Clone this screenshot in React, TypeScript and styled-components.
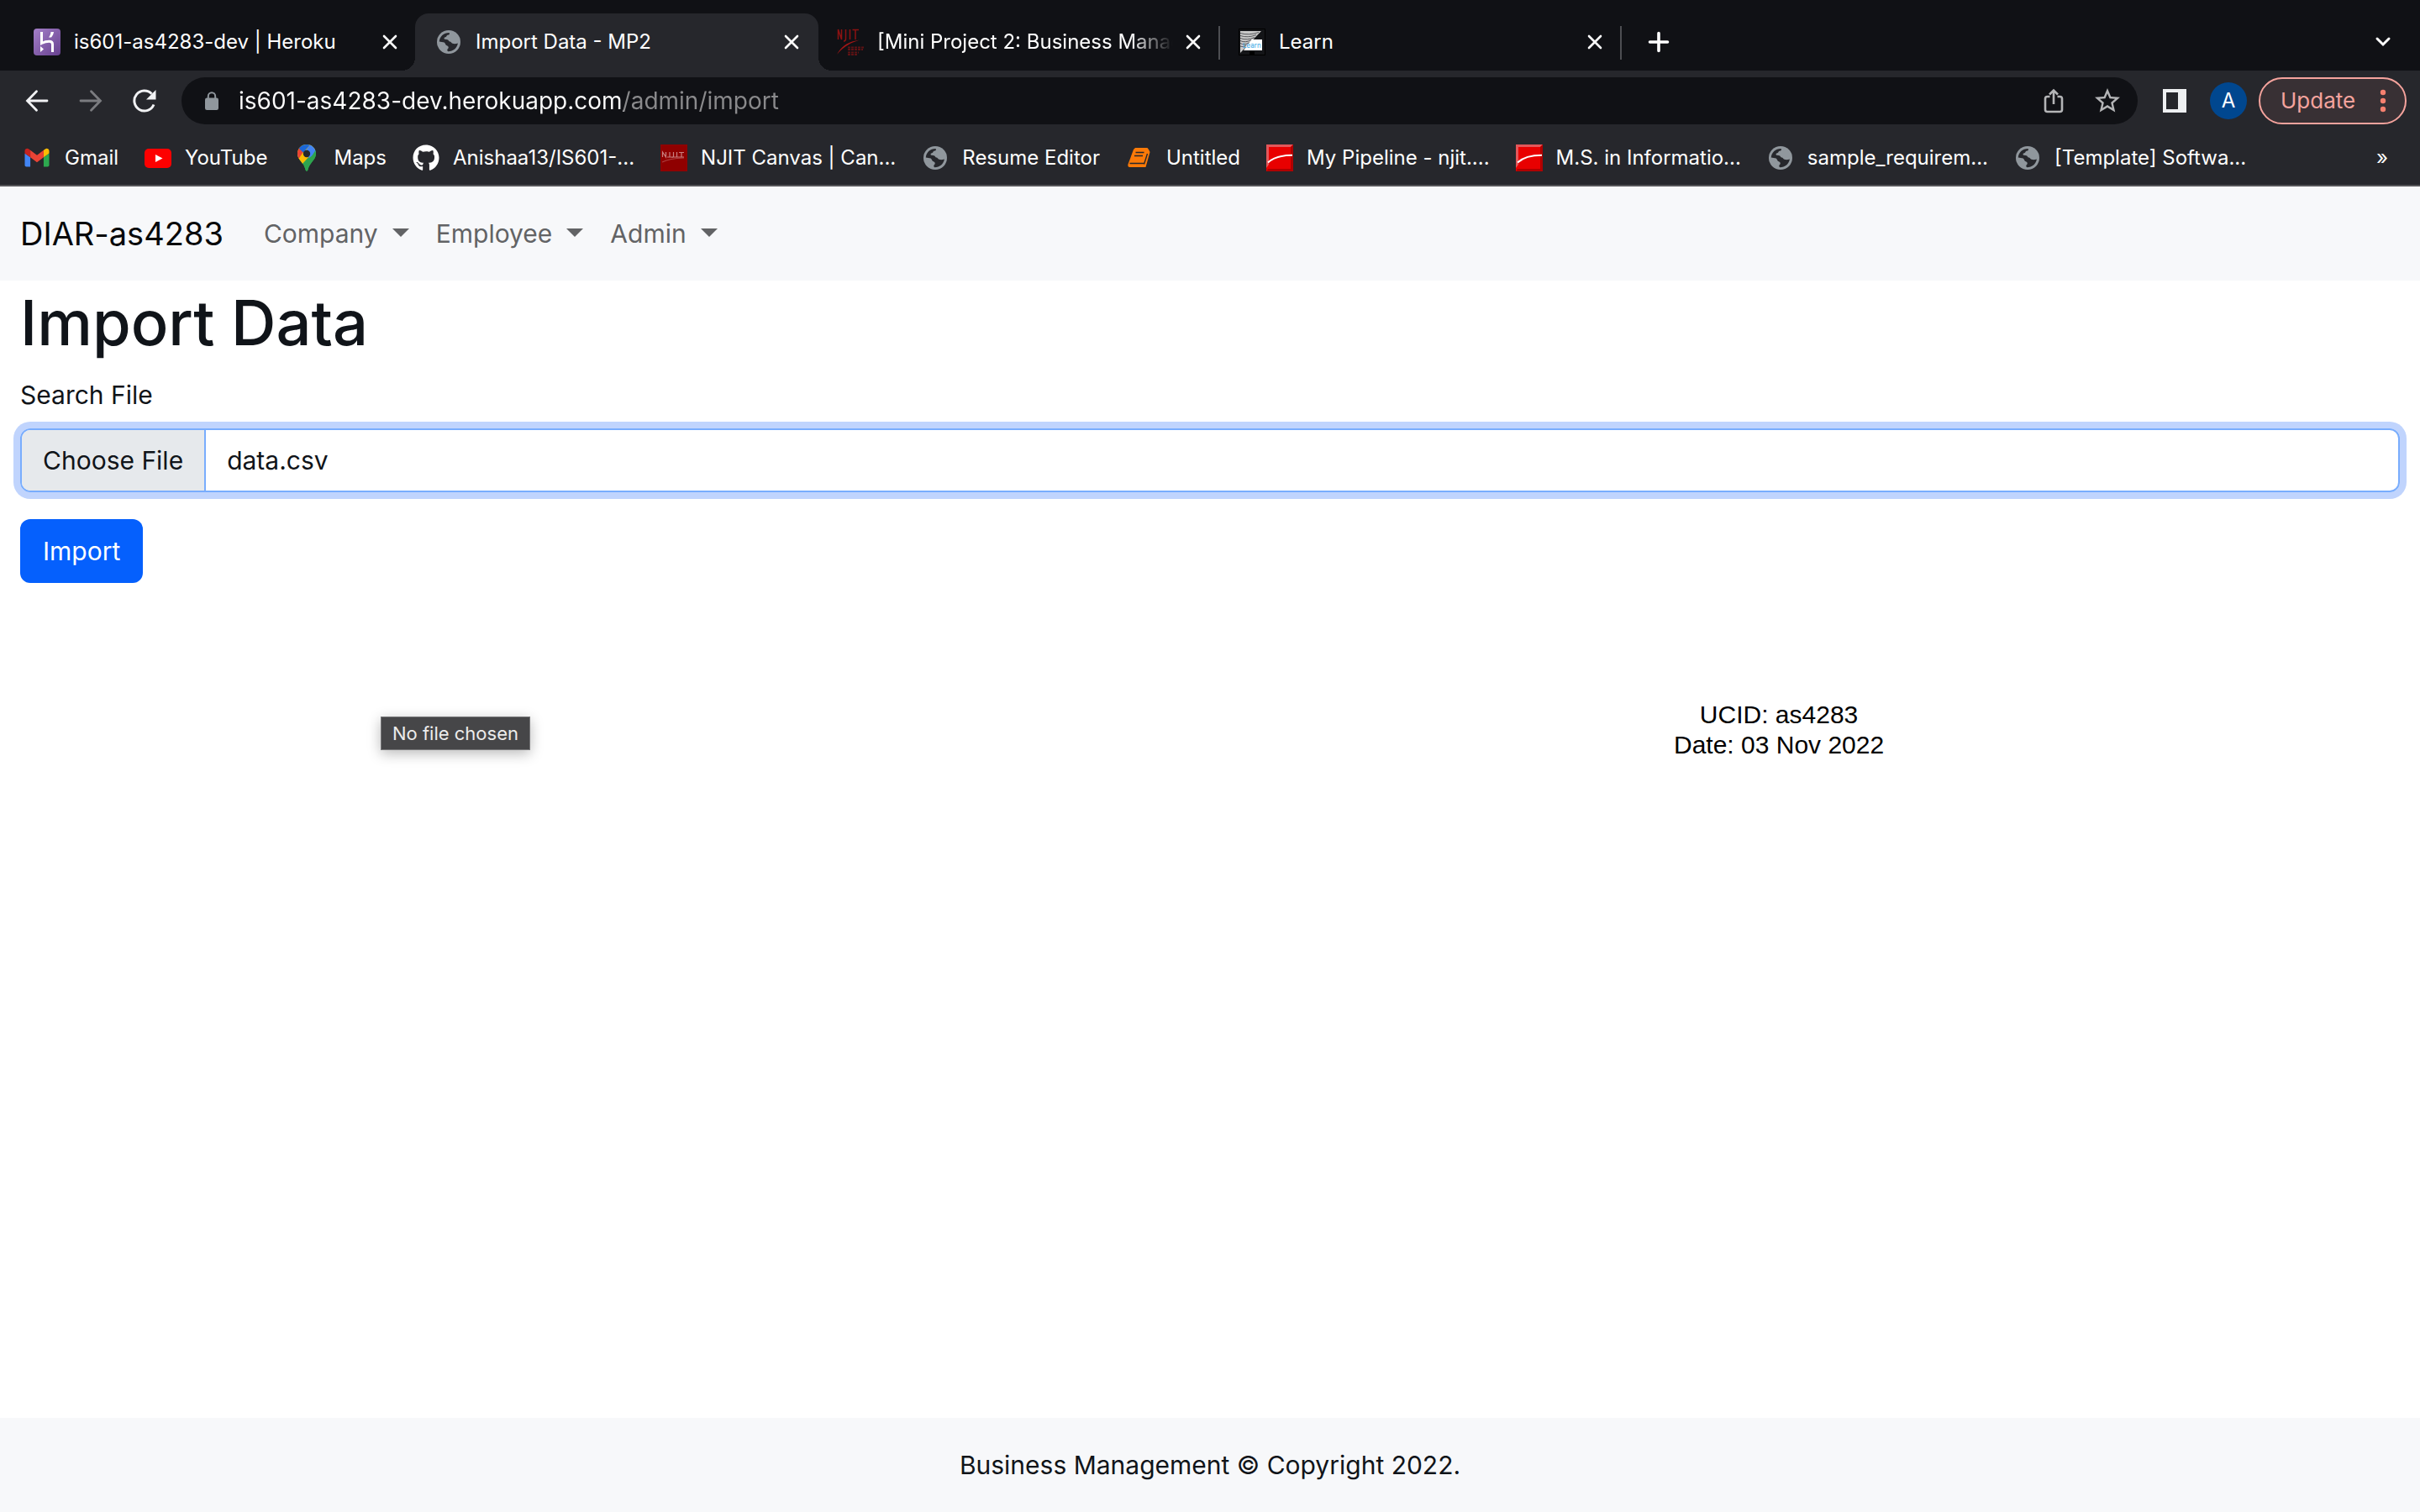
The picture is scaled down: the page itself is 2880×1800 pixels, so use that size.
import React, { useState } from "react";
import styled, { createGlobalStyle, css } from "styled-components";
import { FaGithub } from "react-icons/fa";
import { MdStarOutline } from "react-icons/md";

const color = {
  strip: "#101115",
  toolbar: "#26272c",
  chromeText: "#ffffff",
  chromeMuted: "#8a8a8c",
  iconGray: "#90979d",
  panel: "#f7f8fa",
  ink: "#101419",
  navLink: "#626365",
  focusBorder: "#79adfd",
  focusRing: "#c0d4fd",
  primary: "#0560fd",
};

const GlobalStyle = createGlobalStyle`
  *, *::before, *::after { box-sizing: border-box; }
  body {
    margin: 0;
    background: #ffffff;
    color: ${color.ink};
    font-family: Inter, "Liberation Sans", sans-serif;
    font-size: 30px;
    line-height: 48px;
  }
  button, input { font: inherit; color: inherit; }
  button { border: 0; padding: 0; background: none; cursor: pointer; }
  svg { display: block; flex: none; }
`;

const Page = styled.div`
  min-height: 100vh;
  display: flex;
  flex-direction: column;
`;

/* ---------- browser window ---------- */

const Browser = styled.header`
  background: ${color.toolbar};
  color: ${color.chromeText};
  border-bottom: 2px solid #555558;
  font-size: 24px;
  line-height: 32px;
`;

const TabStrip = styled.div`
  display: flex;
  align-items: flex-end;
  height: 84px;
  padding: 0 16px;
  background: ${color.strip};
`;

const flare = css`
  content: "";
  position: absolute;
  bottom: 0;
  width: 16px;
  height: 16px;
`;

const Tab = styled.div<{ $active?: boolean; $divided?: boolean }>`
  position: relative;
  display: flex;
  align-items: center;
  width: 478px;
  height: 68px;
  padding: 0 14px 0 24px;
  border-radius: 16px 16px 0 0;
  ${(p) =>
    p.$active &&
    css`
      width: 480px;
      margin-right: -2px;
      padding-right: 16px;
      background: ${color.toolbar};
      &::before {
        ${flare}
        left: -16px;
        background: radial-gradient(circle at 0 0, transparent 16px, ${color.toolbar} 16px);
      }
      &::after {
        ${flare}
        right: -16px;
        background: radial-gradient(circle at 100% 0, transparent 16px, ${color.toolbar} 16px);
      }
    `}
  ${(p) =>
    p.$divided &&
    css`
      &::after {
        content: "";
        position: absolute;
        right: -2px;
        top: 15px;
        width: 2px;
        height: 40px;
        background: #4d4e52;
      }
    `}
`;

const TabTitle = styled.button<{ $fade?: boolean }>`
  flex: 1;
  min-width: 0;
  display: flex;
  align-items: center;
  gap: 16px;
  white-space: nowrap;
  text-align: left;
  ${(p) => p.$fade && "mask-image: linear-gradient(to right, #000 calc(100% - 60px), transparent calc(100% - 8px));"}
`;

const IconButton = styled.button<{ $size: number }>`
  flex: none;
  display: flex;
  align-items: center;
  justify-content: center;
  width: ${(p) => p.$size}px;
  height: ${(p) => p.$size}px;
`;

const NewTab = styled(IconButton)`
  margin: 0 auto 2px 14px;
`;

const TabSearch = styled(IconButton)`
  margin-bottom: 2px;
  margin-right: -4px;
`;

const Toolbar = styled.div`
  display: flex;
  align-items: center;
  height: 72px;
  padding: 0 16px 0 12px;
`;

const Omnibox = styled.div`
  flex: 1;
  display: flex;
  align-items: center;
  height: 56px;
  margin: 0 12px;
  padding: 0 4px 0 28px;
  border-radius: 28px;
  background: ${color.strip};
`;

const UrlInput = styled.input`
  flex: 1;
  min-width: 0;
  margin-left: 24px;
  padding: 0;
  border: 0;
  outline: 0;
  font-size: 28px;
  line-height: 36px;
  background: linear-gradient(to right, ${color.chromeText} 458px, ${color.chromeMuted} 458px);
  background-clip: text;
  -webkit-text-fill-color: transparent;
`;

const Avatar = styled.button`
  width: 44px;
  height: 44px;
  margin: 0 14px 0 10px;
  border-radius: 50%;
  background: #00478f;
  font-size: 24px;
  line-height: 44px;
`;

const Update = styled.button`
  display: flex;
  align-items: center;
  justify-content: space-between;
  width: 176px;
  height: 56px;
  padding: 0 22px 0 24px;
  border: 2px solid #f5a39d;
  border-radius: 28px;
  background: #383034;
  color: #f5a39d;
  font-size: 26px;
`;

const Bookmarks = styled.nav`
  display: flex;
  align-items: center;
  gap: 31px;
  height: 64px;
  padding: 0 38px 0 29px;
`;

const Bookmark = styled.a`
  display: flex;
  align-items: center;
  gap: 16px;
  color: inherit;
  text-decoration: none;
  white-space: nowrap;
`;

const More = styled.button`
  margin-left: auto;
`;

/* ---------- web page ---------- */

const Navbar = styled.nav`
  display: flex;
  align-items: center;
  height: 112px;
  padding: 0 24px;
  background: ${color.panel};
`;

const Brand = styled.a`
  margin-right: 32px;
  color: #08090a;
  font-size: 38px;
  line-height: 60px;
  text-decoration: none;
`;

const NavItem = styled.button`
  display: flex;
  align-items: center;
  gap: 17px;
  padding: 16px;
  color: ${color.navLink};
  &::after {
    content: "";
    margin-bottom: 2px;
    border: 10px solid transparent;
    border-top-color: currentColor;
    border-bottom: 0;
  }
`;

const Main = styled.main`
  flex: 1;
  position: relative;
  padding: 0 24px;
`;

const Title = styled.h1`
  margin: 0 0 12px;
  font-size: 74px;
  font-weight: 500;
  line-height: 100px;
`;

const Form = styled.form`
  display: flex;
  flex-direction: column;
  align-items: flex-start;
`;

const FieldLabel = styled.label`
  margin-bottom: 16px;
`;

const HiddenInput = styled.input`
  position: absolute;
  width: 1px;
  height: 1px;
  opacity: 0;
`;

const FileField = styled.label`
  display: flex;
  align-self: stretch;
  margin-bottom: 32px;
  border: 2px solid ${color.focusBorder};
  border-radius: 12px;
  overflow: hidden;
  box-shadow: 0 0 0 8px ${color.focusRing};
  cursor: pointer;
`;

const ChooseFile = styled.span`
  padding: 12px 25px;
  border-right: 2px solid ${color.focusBorder};
  background: #e6e9ec;
`;

const FileName = styled.span`
  padding: 12px 25px;
`;

const Submit = styled.button`
  padding: 14px 27px;
  border-radius: 12px;
  background: ${color.primary};
  color: #ffffff;
`;

const Tooltip = styled.div`
  position: absolute;
  top: 519px;
  left: 453px;
  padding: 3px 13px;
  border: 1px solid #767678;
  background: #464648;
  color: #ececec;
  font-size: 22px;
  line-height: 32px;
  box-shadow: 0 4px 16px rgba(0, 0, 0, 0.28);
`;

const Stamp = styled.p`
  position: absolute;
  top: 499px;
  left: 1992px;
  margin: 0;
  color: #000000;
  font-family: "Liberation Sans", Arial, sans-serif;
  font-size: 30px;
  line-height: 36px;
  text-align: center;
`;

const Footer = styled.footer`
  display: flex;
  align-items: center;
  justify-content: center;
  height: 112px;
  background: ${color.panel};
`;

/* ---------- icons ---------- */

const Close = () => (
  <svg width="18" height="18" viewBox="0 0 18 18" stroke="#fff" strokeWidth="2.6" strokeLinecap="round">
    <path d="M2 2l14 14M16 2L2 16" />
  </svg>
);

const Globe = () => (
  <svg width="32" height="32" viewBox="-2 -2 32 32">
    <circle cx="14" cy="14" r="14" fill={color.iconGray} />
    <path
      fill={color.toolbar}
      d="M2.8 13.4C3 7.600 8 2.900 14.500 2.900C15.500 4.200 15 5.600 12.500 5.800C11.300 6 11.800 8 10 8.200C8 8.500 8.200 10.600 9.800 10.800C12 11 13.600 11.200 14 12.600C14.400 13.800 16.300 13.400 17 14.600C18 16.400 21.600 16.800 24.900 15.600C24 21.200 19.600 25.200 13.200 25.200C12 24.600 12 22.600 13 22C14.400 21.200 13.800 18.800 12.200 18.400C9.800 18 10.600 16 8.600 14.600C7 13.500 4.600 14.200 2.800 13.400Z"
    />
  </svg>
);

const Lock = () => (
  <svg width="16" height="22" viewBox="0 0 16 22">
    <path d="M3.800 9V5.400a4.200 4.200 0 0 1 8.400 0V9" fill="none" stroke={color.iconGray} strokeWidth="2" />
    <rect y="7.500" width="16" height="14.500" rx="2.200" fill={color.iconGray} />
  </svg>
);

const Heroku = () => (
  <svg width="32" height="32" viewBox="0 0 32 32">
    <defs>
      <linearGradient id="heroku" x1="0" y1="0" x2="1" y2="1">
        <stop offset="0" stopColor="#a47fc8" />
        <stop offset="1" stopColor="#67418f" />
      </linearGradient>
    </defs>
    <rect width="32" height="32" rx="4" fill="url(#heroku)" />
    <path d="M9.500 4v13.500c3-1.500 6-2.300 9-2.300 3 0 4 1.600 4 3.600V28" fill="none" stroke="#fff" strokeWidth="3" />
    <path d="M8 21l4 3.500L8 28zM20.500 4H24c-.3 2.500-1.400 4.600-3 6.400h-3c1.600-2 2.400-4 2.500-6.400z" fill="#fff" />
  </svg>
);

const NjitMark = () => (
  <svg width="32" height="32" viewBox="0 0 32 32">
    <g fill="none" stroke="#8c1212" strokeWidth="1.500">
      <path d="M1.500 13V1l4 12V1M10.500 1v11c0 2-1 3-2.500 3M15.500 1v12M22 1v12M18.500 1.500H26" />
    </g>
    <path d="M0 31C5 21 13 15.500 27 13.500 17 17 8 21 0 31z" fill="#a31616" />
    <path d="M13 22.500h19M13 25h18M13 28.500h13M13 31h12" stroke="#5e1214" strokeWidth="2" strokeDasharray="3 1" />
  </svg>
);

const Learn = () => (
  <svg width="32" height="32" viewBox="0 0 32 32">
    <rect x=".5" y=".5" width="31" height="31" fill="#141518" stroke="#000" />
    <path d="M2 3h25L2 29z" fill="#c9c9c9" />
    <path d="M2 5.500q10 3 22-1M2 8.500q9 3 19-1M2 11.500q8 3 17-1M2 14.500q6 3 13-1M2 17.500q5 3 11-1M2 21q4 2 7-1" stroke="#55565a" strokeWidth="1" fill="none" />
    <path d="M16 13h12v13H6l4-6z" fill="#fff" />
    <text x="5" y="22.500" fontSize="8" fontFamily="Inter, sans-serif" fill="#35a7e6">Learn</text>
    <path d="M13 27h6v5h-6z" fill="#000" />
  </svg>
);

const Plus = () => (
  <svg width="26" height="26" viewBox="0 0 26 26" stroke="#fff" strokeWidth="3.600" strokeLinecap="round">
    <path d="M13 2.500v21M2.500 13h21" />
  </svg>
);

const ChevronDown = () => (
  <svg width="20" height="14" viewBox="0 0 20 14" fill="none" stroke="#fff" strokeWidth="3" strokeLinecap="round">
    <path d="M3 3l7 7 7-7" />
  </svg>
);

const Arrow = ({ forward }: { forward?: boolean }) => (
  <svg
    width="28"
    height="28"
    viewBox="0 0 28 28"
    fill="none"
    stroke={forward ? "#7b7c80" : "#f1f2f4"}
    strokeWidth="2.800"
    strokeLinecap="round"
  >
    <path d={forward ? "M2 14h23M14.500 2.800L25.500 14 14.500 25.200" : "M26 14H3M13.500 2.800L2.500 14l11 11.200"} />
  </svg>
);

const Reload = () => (
  <svg width="28" height="28" viewBox="0 0 28 28">
    <path d="M25 18.500A12 12 0 1 1 22.500 5.700" fill="none" stroke="#f1f2f4" strokeWidth="3" />
    <path d="M27.500 1v11.500H16z" fill="#f1f2f4" />
  </svg>
);

const Share = () => (
  <svg width="24" height="30" viewBox="0 0 24 30" fill="none" stroke="#b4b5b7" strokeWidth="2.600">
    <path d="M7.500 10H4.500a2.500 2.500 0 0 0-2.500 2.500v13A2.500 2.500 0 0 0 4.500 28h15a2.500 2.500 0 0 0 2.500-2.500v-13a2.500 2.500 0 0 0-2.500-2.500H16.500" />
    <path d="M12 19V3M7 7.500L12 2.500l5 5" />
  </svg>
);

const SidePanel = () => (
  <svg width="28" height="28" viewBox="0 0 28 28">
    <path d="M0 0h28v28H0zM4 4v20h14V4z" fill="#eef0f2" fillRule="evenodd" />
  </svg>
);

const Dots = () => (
  <svg width="8" height="28" viewBox="0 0 8 28" fill="#f5806f">
    <circle cx="4" cy="4" r="3.200" />
    <circle cx="4" cy="14" r="3.200" />
    <circle cx="4" cy="24" r="3.200" />
  </svg>
);

const Gmail = () => (
  <svg width="32" height="32" viewBox="50.500 27.500 97 97">
    <path fill="#4285f4" d="M58 108h14V74L52 59v43c0 3.320 2.690 6 6 6" />
    <path fill="#2da94f" d="M120 108h14c3.320 0 6-2.690 6-6V59l-20 15" />
    <path fill="#fbbc04" d="M120 48v26l20-15v-8c0-7.420-8.470-11.650-14.400-7.200" />
    <path fill="#ea4335" d="M72 74V48l24 18 24-18v26L96 92" />
    <path fill="#c5221f" d="M52 51v8l20 15V48l-5.600-4.200c-5.940-4.450-14.400-.22-14.400 7.200" />
  </svg>
);

const YouTube = () => (
  <svg width="32" height="32" viewBox="0 0 32 32">
    <rect y="5" width="32" height="23" rx="5" fill="#fd0000" />
    <path d="M13 12l8.500 4.500L13 21z" fill="#fff" />
  </svg>
);

const MapsPin = () => (
  <svg width="32" height="32" viewBox="0 0 32 32">
    <defs>
      <clipPath id="pin">
        <path d="M16 0c6.200 0 11 4.900 11 11 0 7.500-7.500 10-9.700 19.500-.4 1.500-2.200 1.500-2.600 0C12.500 21 5 18.500 5 11 5 4.900 9.800 0 16 0z" />
      </clipPath>
    </defs>
    <g clipPath="url(#pin)">
      <path d="M0 0h32v32H0z" fill="#2ea44f" />
      <path d="M0 0h32L10 24 0 16z" fill="#fbbc04" />
      <path d="M20 0h12v6L19 16l-6-6z" fill="#4285f4" />
      <path d="M27 6l5 4v22H8L21 15.500z" fill="#2ea44f" />
      <path d="M0 0h7.500l6 6.500L6.500 17 0 14z" fill="#ea4335" />
      <path d="M6 4L12-2h8l-1 3.500-7 8.200z" fill="#1a67d8" />
    </g>
    <circle cx="16" cy="11" r="4.200" fill={color.toolbar} />
  </svg>
);

const NjitSquare = () => (
  <svg width="32" height="32" viewBox="0 0 32 32">
    <path d="M0 0h32v32H0z" fill="#8f0000" />
    <g fill="none" stroke="#c98080" strokeWidth="1.200">
      <path d="M2.500 15V9l4 6V9M11 9v6M15.500 9v5c0 1-.6 1.500-2 1.500M19.500 9v6M22 9.500h6M25 9.500v5.500M8 15h20" />
      <path d="M2 21c6-3 12-4.500 26-5" opacity=".5" />
    </g>
  </svg>
);

const Book = () => (
  <svg width="32" height="32" viewBox="0 0 32 32">
    <path d="M11 4h14.500l1.500 2 1.500 3-5 18H4.500C2.500 27 2 25.500 2.500 23.500L9 6z" fill="#fb7a08" />
    <path d="M4.500 22.500h17M25.500 11l-4 12.500" stroke={color.toolbar} strokeWidth="1.400" fill="none" />
    <path d="M11.500 9.500h10M10 13.500h10" stroke={color.toolbar} strokeWidth="1.600" />
  </svg>
);

const RedSwoosh = () => (
  <svg width="32" height="32" viewBox="0 0 32 32">
    <path d="M0 0h32v32H0z" fill="#e80000" />
    <path d="M0 0h32l-3 3H3v21l-3 4z" fill="#e3575a" />
    <path d="M32 0v32H0l2-3h27V3z" fill="#b00000" />
    <path d="M2 21.500C8 16 17 12.800 31 12.800" fill="none" stroke="#fff" strokeWidth="2" />
  </svg>
);

/* ---------- data ---------- */

const tabs = [
  { title: "is601-as4283-dev | Heroku", icon: <Heroku /> },
  { title: "Import Data - MP2", icon: <Globe />, active: true },
  { title: "[Mini Project 2: Business Manag", icon: <NjitMark />, divided: true, fade: true },
  { title: "Learn", icon: <Learn />, divided: true },
];

const bookmarks = [
  { name: "Gmail", icon: <Gmail /> },
  { name: "YouTube", icon: <YouTube /> },
  { name: "Maps", icon: <MapsPin /> },
  { name: "Anishaa13/IS601-...", icon: <FaGithub size={32} /> },
  { name: "NJIT Canvas | Can...", icon: <NjitSquare /> },
  { name: "Resume Editor", icon: <Globe /> },
  { name: "Untitled", icon: <Book /> },
  { name: "My Pipeline - njit....", icon: <RedSwoosh /> },
  { name: "M.S. in Informatio...", icon: <RedSwoosh /> },
  { name: "sample_requirem...", icon: <Globe /> },
  { name: "[Template] Softwa...", icon: <Globe /> },
];

export default function App() {
  const [fileName, setFileName] = useState("data.csv");
  return (
    <Page>
      <GlobalStyle />
      <Browser>
        <TabStrip>
          {tabs.map((t) => (
            <Tab key={t.title} $active={t.active} $divided={t.divided}>
              <TabTitle $fade={t.fade}>
                {t.icon}
                {t.title}
              </TabTitle>
              <IconButton $size={32} aria-label="Close tab">
                <Close />
              </IconButton>
            </Tab>
          ))}
          <NewTab $size={64} aria-label="New tab">
            <Plus />
          </NewTab>
          <TabSearch $size={64} aria-label="Search tabs">
            <ChevronDown />
          </TabSearch>
        </TabStrip>
        <Toolbar>
          <IconButton $size={64} aria-label="Back">
            <Arrow />
          </IconButton>
          <IconButton $size={64} aria-label="Forward">
            <Arrow forward />
          </IconButton>
          <IconButton $size={64} aria-label="Reload">
            <Reload />
          </IconButton>
          <Omnibox>
            <Lock />
            <UrlInput aria-label="Address" defaultValue="is601-as4283-dev.herokuapp.com/admin/import" />
            <IconButton $size={64} aria-label="Share">
              <Share />
            </IconButton>
            <IconButton $size={64} aria-label="Bookmark this page">
              <MdStarOutline size={36} color="#b4b5b7" />
            </IconButton>
          </Omnibox>
          <IconButton $size={64} aria-label="Side panel">
            <SidePanel />
          </IconButton>
          <Avatar>A</Avatar>
          <Update>
            Update
            <Dots />
          </Update>
        </Toolbar>
        <Bookmarks>
          {bookmarks.map((b) => (
            <Bookmark key={b.name} href="#">
              {b.icon}
              {b.name}
            </Bookmark>
          ))}
          <More>»</More>
        </Bookmarks>
      </Browser>

      <Navbar>
        <Brand href="#">DIAR-as4283</Brand>
        <NavItem>Company</NavItem>
        <NavItem>Employee</NavItem>
        <NavItem>Admin</NavItem>
      </Navbar>
      <Main>
        <Title>Import Data</Title>
        <Form onSubmit={(e) => e.preventDefault()}>
          <FieldLabel htmlFor="file">Search File</FieldLabel>
          <HiddenInput
            id="file"
            type="file"
            accept=".csv"
            onChange={(e) => setFileName(e.target.files?.[0]?.name ?? fileName)}
          />
          <FileField htmlFor="file">
            <ChooseFile>Choose File</ChooseFile>
            <FileName>{fileName}</FileName>
          </FileField>
          <Submit type="submit">Import</Submit>
        </Form>
        <Tooltip role="tooltip">No file chosen</Tooltip>
        <Stamp>
          UCID: as4283
          <br />
          Date: 03 Nov 2022
        </Stamp>
      </Main>
      <Footer>Business Management © Copyright 2022.</Footer>
    </Page>
  );
}
